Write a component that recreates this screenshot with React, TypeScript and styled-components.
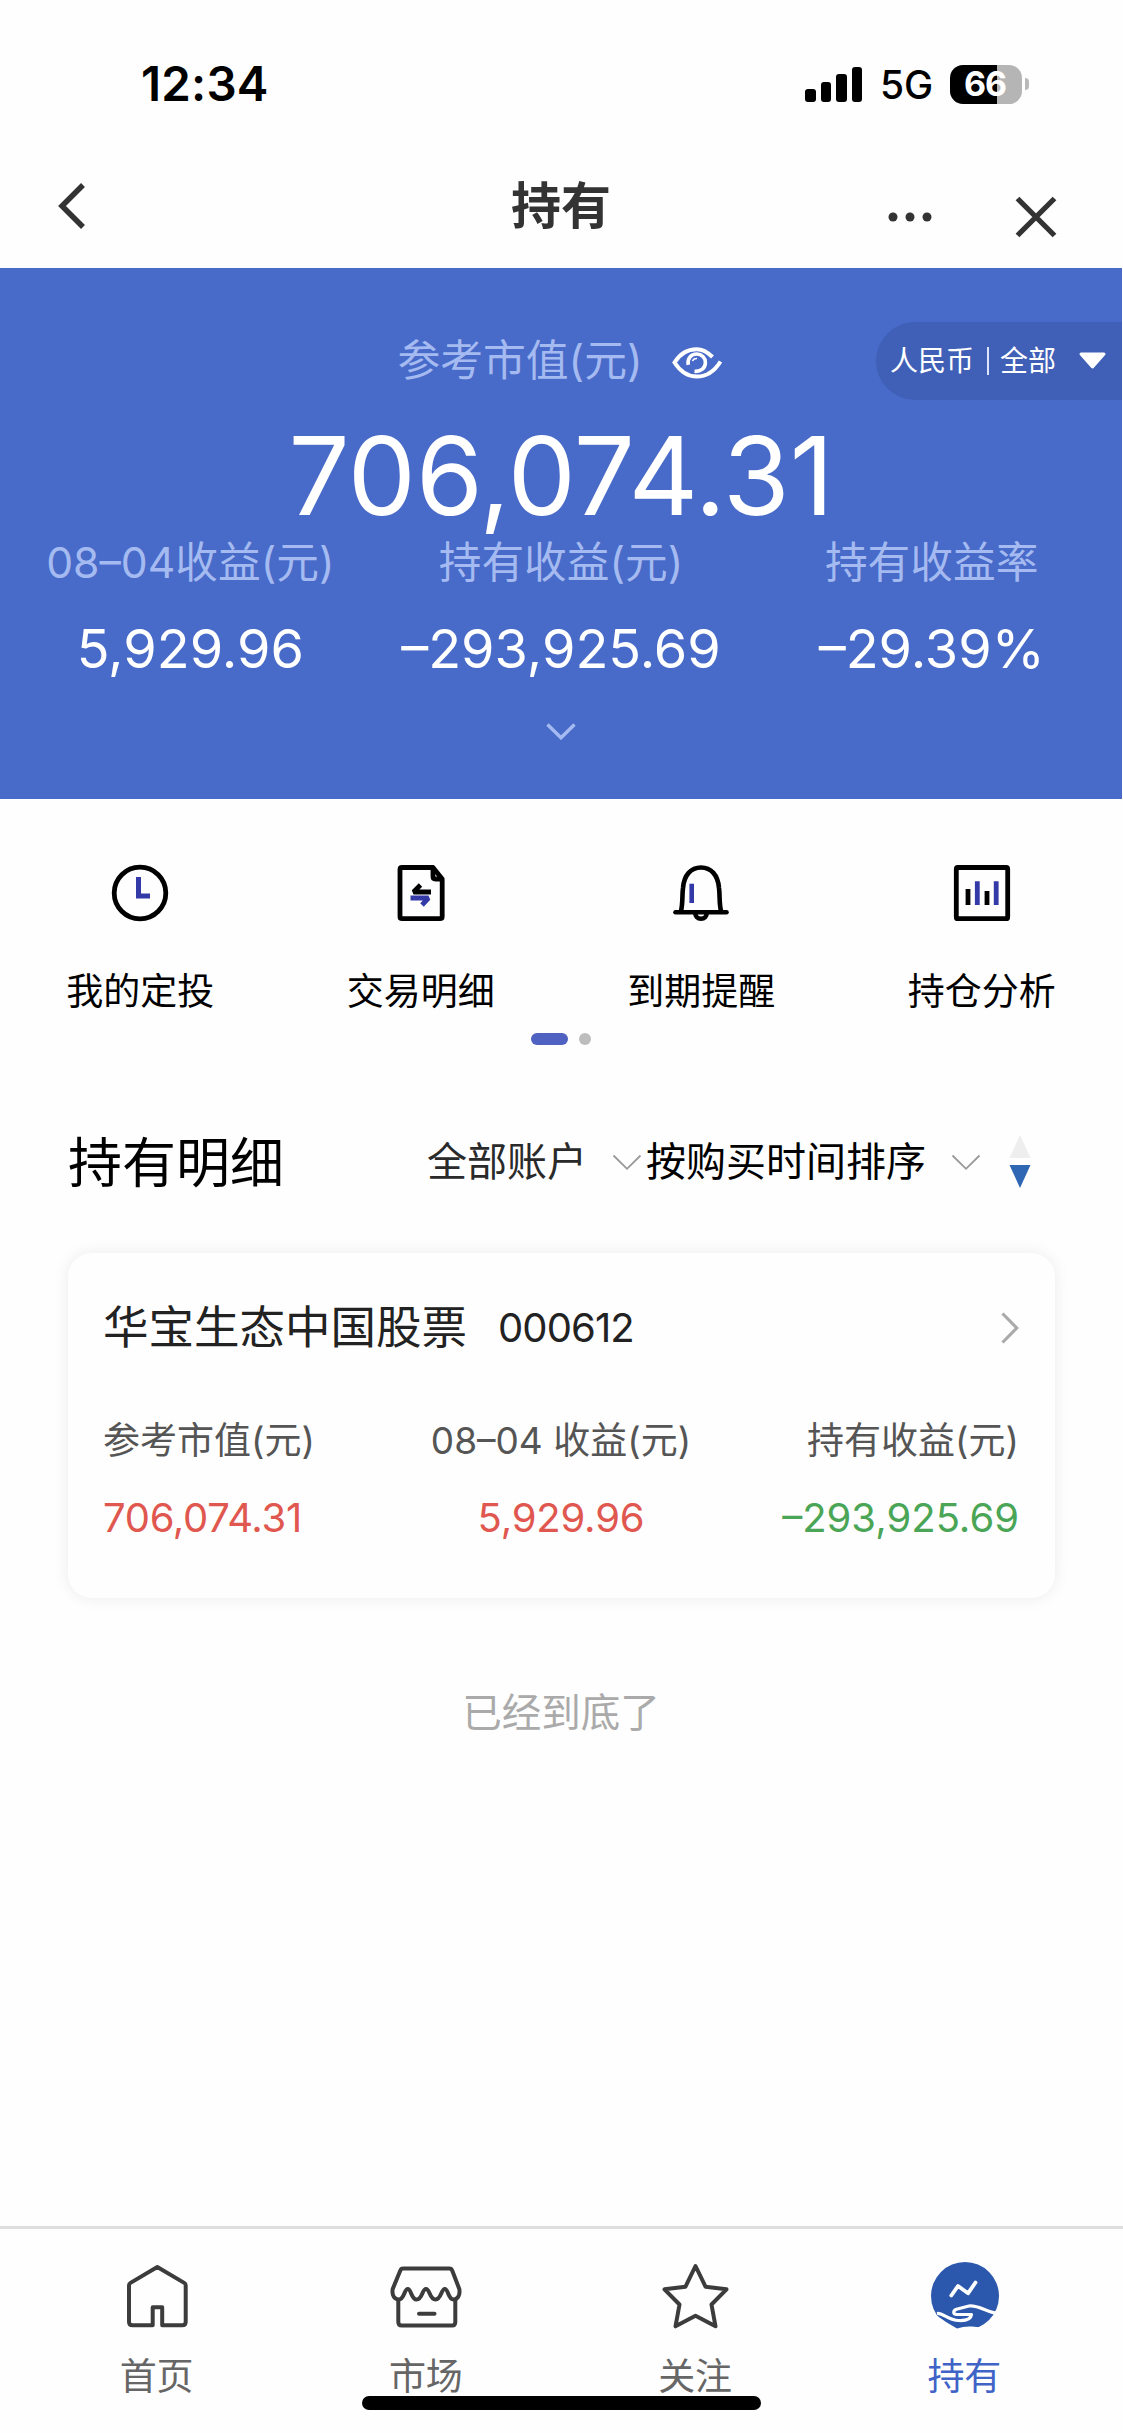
import React from "react";
import styled, { createGlobalStyle } from "styled-components";

const GlobalStyle = createGlobalStyle`
  *, *::before, *::after { box-sizing: border-box; }
  body {
    margin: 0;
    background: #fefefe;
    font-family: Inter, "Noto Sans CJK SC", sans-serif;
    font-weight: 400;
    color: #000;
  }
`;

const Screen = styled.div`
  position: relative;
  width: 1123px;
  height: 2433px;
  padding-right: 1px;
  display: flex;
  flex-direction: column;
  overflow: hidden;
  background: #fefefe;
`;

const Text = styled.span<{ $size: number; $color?: string; $spacing?: number; $weight?: number }>`
  font-size: ${(p) => p.$size}px;
  color: ${(p) => p.$color ?? "inherit"};
  letter-spacing: ${(p) => p.$spacing ?? 0}px;
  font-weight: ${(p) => p.$weight ?? 400};
  line-height: 1;
  white-space: nowrap;
`;

const Icon = styled.svg`
  display: block;
  flex: none;
  fill: none;
`;

/* status bar */
const StatusBar = styled.header`
  height: 168px;
  padding: 0 93px 0 141px;
  display: flex;
  align-items: center;
  justify-content: space-between;
`;

const StatusIcons = styled.div`
  display: flex;
  align-items: center;
`;

const Signal = styled.div`
  display: flex;
  align-items: flex-end;
  gap: 5px;
  height: 36px;
  margin-right: 18px;
`;

const SignalBar = styled.i<{ $height: number }>`
  width: 10.4px;
  height: ${(p) => p.$height}px;
  border-radius: 3px;
  background: #000;
`;

const Network = styled.div`
  width: 70px;
  display: flex;
`;

const Battery = styled.div`
  width: 72px;
  height: 39px;
  padding-right: 2px;
  border-radius: 13px;
  display: flex;
  align-items: center;
  justify-content: center;
  background: linear-gradient(90deg, #000 0 47.5px, #b5b5b5 47.5px);
`;

const BatteryCap = styled.i`
  width: 4px;
  height: 12px;
  margin-left: 3px;
  border-radius: 0 6px 6px 0;
  background: #b9b9b9;
`;

/* title bar */
const NavBar = styled.nav`
  height: 100px;
  padding: 0 65px 0 57px;
  display: grid;
  grid-template-columns: 1fr auto 1fr;
  color: #333;
`;

const NavSide = styled.div<{ $end?: boolean }>`
  height: ${(p) => (p.$end ? 98 : 75)}px;
  display: flex;
  align-items: center;
  gap: 83px;
  justify-content: ${(p) => (p.$end ? "flex-end" : "flex-start")};
`;

const NavTitle = styled.h1`
  margin: 0;
  height: 76px;
  display: flex;
  align-items: center;
  padding-left: 8px;
`;

/* blue summary */
const Summary = styled.section`
  height: 531px;
  padding-top: 54px;
  background: #486ac8;
  color: #fff;
`;

const SummaryTop = styled.div`
  height: 78px;
  display: grid;
  grid-template-columns: 1fr auto 1fr;
  align-items: center;
`;

const SummaryLabel = styled.div`
  grid-column: 2;
  display: flex;
  align-items: center;
  gap: 29px;
  padding-right: 2px;

  svg {
    margin-top: 4px;
  }
`;

const CurrencyPill = styled.button`
  justify-self: end;
  width: 246px;
  height: 78px;
  padding: 0 15px 0 14px;
  border: 0;
  border-radius: 39px 0 0 39px;
  background: #4060b7;
  color: #fff;
  font-family: inherit;
  display: flex;
  align-items: center;
  justify-content: space-between;
`;

const PillText = styled.span`
  display: flex;
  align-items: center;
  gap: 11px;
`;

const PillDivider = styled.i`
  width: 2px;
  height: 28px;
  margin: 0 0 0 2px;
  background: #dde5fb;
`;

const Amount = styled.div`
  height: 134px;
  padding-top: 18px;
  display: flex;
  align-items: center;
  justify-content: center;
`;

const Stats = styled.div`
  padding: 0 5px;
  display: grid;
  grid-template-columns: repeat(3, 1fr);
`;

const Stat = styled.div`
  display: grid;
  grid-template-rows: 58px 114px;
  align-items: center;
  justify-items: center;
`;

const Expand = styled.div`
  height: 50px;
  display: flex;
  align-items: center;
  justify-content: center;
`;

/* shortcuts */
const Shortcuts = styled.section`
  padding-top: 64px;
  display: grid;
  grid-template-columns: repeat(4, 1fr);
`;

const Shortcut = styled.div`
  display: grid;
  grid-template-rows: 60px 60px;
  row-gap: 38px;
  align-items: center;
  justify-items: center;
`;

const Pager = styled.div`
  margin-top: 12px;
  display: flex;
  justify-content: center;
  gap: 11px;
`;

const PagerDot = styled.i<{ $active?: boolean }>`
  width: ${(p) => (p.$active ? 37 : 12)}px;
  height: 12px;
  border-radius: 6px;
  background: ${(p) => (p.$active ? "#4f62c1" : "#bdbdbd")};
`;

/* holdings */
const ListHeader = styled.div`
  height: 80px;
  margin-top: 77px;
  padding: 0 91px 0 68px;
  display: flex;
  align-items: center;
`;

const ListTitle = styled.h2`
  margin: 0;
  width: 359px;
  padding-top: 4px;
  display: flex;
`;

const Filter = styled.div<{ $gap: number; $after: number }>`
  display: flex;
  align-items: center;
  gap: ${(p) => p.$gap}px;
  margin-right: ${(p) => p.$after}px;
`;

const Card = styled.article`
  height: 345px;
  margin: 51px 67px 0 68px;
  padding: 40px 36px 0 35px;
  border-radius: 24px;
  background: #fefefe;
  box-shadow: 0 0 16px rgba(0, 0, 0, 0.08);
`;

const CardHead = styled.div`
  height: 70px;
  display: flex;
  align-items: center;
  gap: 31px;
`;

const CardArrow = styled.div`
  margin-left: auto;
`;

const CardGrid = styled.div`
  margin-top: 52px;
  display: grid;
  grid-template-columns: repeat(3, 1fr);
`;

const CardCell = styled.div<{ $align: string }>`
  display: grid;
  grid-template-rows: 50px 51px;
  row-gap: 27px;
  align-items: center;
  justify-items: ${(p) => p.$align};
`;

const EndNote = styled.div`
  height: 60px;
  margin-top: 86px;
  display: flex;
  align-items: center;
  justify-content: center;
`;

/* tab bar */
const TabBar = styled.footer`
  height: 207px;
  margin: auto -1px 0 0;
  padding: 30px 24px 0 22px;
  border-top: 3px solid #dedede;
  display: grid;
  grid-template-columns: repeat(4, 1fr);
  align-items: start;
`;

const Tab = styled.div<{ $active?: boolean }>`
  display: grid;
  grid-template-rows: 72px 51px;
  row-gap: 20px;
  align-items: center;
  justify-items: center;
  color: ${(p) => (p.$active ? "#3f63c6" : "#666")};
`;

const HomeIndicator = styled.div`
  position: absolute;
  left: 362px;
  bottom: 23px;
  width: 399px;
  height: 14px;
  border-radius: 7px;
  background: #000;
`;

const INK = "#333aa8";

const BackIcon = () => (
  <Icon width="30" height="48" viewBox="0 0 30 48" stroke="#333" strokeWidth="5.500">
    <path d="M26 3 L5 24 L26 45" />
  </Icon>
);

const MoreIcon = () => (
  <Icon width="44" height="10" viewBox="0 0 44 10">
    <g fill="#333">
      <circle cx="5" cy="5" r="4.500" />
      <circle cx="22" cy="5" r="4.500" />
      <circle cx="39" cy="5" r="4.500" />
    </g>
  </Icon>
);

const CloseIcon = () => (
  <Icon width="42" height="42" viewBox="0 0 42 42" stroke="#333" strokeWidth="5.300">
    <path d="M2.500 2.500 L39.500 39.500 M39.500 2.500 L2.500 39.500" />
  </Icon>
);

const EyeIcon = () => (
  <Icon width="51" height="32" viewBox="0 0 51 32" stroke="#fff" strokeWidth="4">
    <path d="M40.500 10 C35 4.500 30 2.200 24.700 2.200 C14 2.200 6.500 9 2.500 15.500 C8 24 15.500 29.600 24.700 29.600 C35 29.600 43 23.500 48.500 14.500" />
    <path d="M16.300 17.800 C15 11.500 19 7 24.800 7 C29.700 7 33.400 10.800 33.400 15.500 C33.400 21 29 24.800 22.500 24.300" strokeWidth="3.600" />
    <path d="M20.500 14 C21.200 12.300 22.800 11.300 25 11.500" strokeWidth="1.600" />
  </Icon>
);

const CaretIcon = () => (
  <Icon width="29" height="18" viewBox="0 0 29 18">
    <path d="M3 2 H26 L14.500 15 Z" fill="#fff" stroke="#fff" strokeWidth="3" strokeLinejoin="round" />
  </Icon>
);

const Chevron = ({ color, weight }: { color: string; weight: number }) => (
  <Icon width="30" height="17" viewBox="0 0 30 17" stroke={color} strokeWidth={weight}>
    <path d="M1.500 1.500 L15 14.800 L28.500 1.500" />
  </Icon>
);

const ArrowIcon = () => (
  <Icon width="18" height="32" viewBox="0 0 18 32" stroke="#aaa" strokeWidth="3.200">
    <path d="M1.500 1.500 L15.700 16 L1.500 30.500" />
  </Icon>
);

const SortIcon = () => (
  <Icon width="22" height="54" viewBox="0 0 22 54">
    <path d="M11 0 L21.500 23 H0.500 Z" fill="#eee" />
    <path d="M0.500 30 H21.500 L11 53 Z" fill="#2f67b4" />
  </Icon>
);

const ClockIcon = () => (
  <Icon width="60" height="60" viewBox="0 0 60 60">
    <circle cx="30" cy="30" r="25.800" stroke="#000" strokeWidth="4.800" />
    <path d="M28.500 14 V33 H40" stroke={INK} strokeWidth="5" />
  </Icon>
);

const OrderIcon = () => (
  <Icon width="60" height="60" viewBox="0 0 60 60" stroke="#000" strokeWidth="4.800">
    <path d="M9 6.500 Q9 4.500 11 4.500 H42 L51.200 16 V53.500 Q51.200 55.700 49 55.700 H11 Q9 55.700 9 53.500 Z" strokeLinejoin="round" />
    <path d="M42 5 V13.500 Q42 16 44.500 16 H51" />
    <path d="M40 29 H22.500 L29.500 22" strokeLinejoin="bevel" />
    <path d="M19.500 35 H37.500 L31 42" stroke={INK} strokeLinejoin="bevel" />
  </Icon>
);

const BellIcon = () => (
  <Icon width="60" height="60" viewBox="0 0 60 60" stroke="#000" strokeWidth="4.600">
    <path d="M10 48 C12 40 11 32 12 25 C13 12 20 4.500 30 4.500 C40 4.500 47 12 48 25 C49 32 48 40 50 48" />
    <path d="M4.500 49.200 H55.500" strokeLinecap="round" />
    <path d="M24.300 50 C24.300 53.500 26.500 55.800 30 55.800 C33.500 55.800 35.700 53.500 35.700 50" />
    <path d="M20.700 20.700 V40" stroke={INK} />
  </Icon>
);

const ChartIcon = () => (
  <Icon width="60" height="60" viewBox="0 0 60 60" strokeWidth="4.800">
    <rect x="4.300" y="4.500" width="51.400" height="51.200" rx="1.500" stroke="#000" />
    <path d="M16 26 V42 M35 28 V42" stroke="#000" />
    <path d="M25.300 18.300 V42 M44.200 18.300 V42" stroke={INK} />
  </Icon>
);

const HomeIcon = () => (
  <Icon width="72" height="72" viewBox="0 0 72 72" stroke="#3c3c3c" strokeWidth="4" strokeLinejoin="round">
    <path d="M31.700 66.300 H11.500 Q8 66.300 8 62.800 V26.500 Q8 24.800 9.500 23.900 L36.300 8 L63.200 23.900 Q64.700 24.800 64.700 26.500 V62.800 Q64.700 66.300 61.200 66.300 H41.200 V48.300 H31.700 Z" />
  </Icon>
);

const MarketIcon = () => (
  <Icon width="72" height="72" viewBox="0 0 72 72" stroke="#3c3c3c" strokeWidth="4" strokeLinejoin="round">
    <path d="M13 9.500 H59.500 Q61.500 9.500 62.200 11.500 L69.300 30 C70.500 37 67 40.500 63.500 40.500 C58 40.500 58.500 30 54.800 30 C51 30 51.500 40.500 45.500 40.500 C39.500 40.500 40 30 36 30 C32 30 32.500 40.500 26.700 40.500 C21 40.500 21.500 30 17.800 30 C14 30 14.500 40.500 8.800 40.500 C5 40.500 1.500 37 2.700 30 L10.300 11.500 Q11 9.500 13 9.500 Z" />
    <path d="M8.300 41 V63 Q8.300 66.500 11.800 66.500 H62 Q65.300 66.500 65.300 63 V41" />
    <path d="M29 54.700 H44.500" strokeLinecap="round" />
  </Icon>
);

const StarIcon = () => (
  <Icon width="72" height="72" viewBox="0 0 72 72" stroke="#3c3c3c" strokeWidth="4" strokeLinejoin="round">
    <path d="M36.500 7 L46.500 27.700 L67.500 30.300 L52.500 45.500 L56.500 67.300 L36.500 56.700 L16.500 67.300 L20.500 45.500 L5.500 30.300 L26.500 27.700 Z" />
  </Icon>
);

const HoldIcon = () => (
  <Icon width="72" height="72" viewBox="0 0 72 72">
    <circle cx="37" cy="37" r="34" fill="#2b58ad" />
    <path d="M0 52 L8 56 L18 63 L29 69.500 Q36 67 44 67.500 Q54 69 61 68.500 L62.500 62 L66.500 55.500 L73 54 V73 H0 Z" fill="#fefefe" />
    <path d="M9 54.500 C15 53.500 20 61.500 31 61.500 C38 61.800 43 60 43.500 55.500 L29 55.500 C24.500 55.500 25 51.500 28.500 50.300 L41 47 C50 46 58 52.500 69 54.500" stroke="#fff" strokeWidth="3.200" strokeLinejoin="round" />
    <path d="M23.300 36.500 L30 27 L40 34.300 L47.500 23.500" stroke="#fff" strokeWidth="3.800" strokeLinecap="round" strokeLinejoin="round" />
  </Icon>
);

const stats = [
  { label: "08–04收益(元)", value: "5,929.96" },
  { label: "持有收益(元)", value: "–293,925.69" },
  { label: "持有收益率", value: "–29.39%" },
];

const shortcuts = [
  { label: "我的定投", icon: <ClockIcon /> },
  { label: "交易明细", icon: <OrderIcon /> },
  { label: "到期提醒", icon: <BellIcon /> },
  { label: "持仓分析", icon: <ChartIcon /> },
];

const cells = [
  { label: "参考市值(元)", value: "706,074.31", color: "#e0574f", align: "start", spacing: -0.3 },
  { label: "08–04 收益(元)", value: "5,929.96", color: "#e0574f", align: "center", spacing: -0.2 },
  { label: "持有收益(元)", value: "–293,925.69", color: "#4aa556", align: "end", spacing: 0 },
];

const tabs = [
  { label: "首页", icon: <HomeIcon /> },
  { label: "市场", icon: <MarketIcon /> },
  { label: "关注", icon: <StarIcon /> },
  { label: "持有", icon: <HoldIcon />, active: true },
];

export default function App() {
  return (
    <>
      <GlobalStyle />
      <Screen>
        <StatusBar>
          <Text $size={47.5} $weight={600} $spacing={0.2}>12:34</Text>
          <StatusIcons>
            <Signal>
              {[13.5, 20, 28, 35.5].map((h) => (
                <SignalBar key={h} $height={h} />
              ))}
            </Signal>
            <Network>
              <Text $size={39} $weight={500}>5G</Text>
            </Network>
            <Battery>
              <Text $size={34} $weight={700} $color="#fff" $spacing={-1}>66</Text>
            </Battery>
            <BatteryCap />
          </StatusIcons>
        </StatusBar>

        <NavBar>
          <NavSide>
            <BackIcon />
          </NavSide>
          <NavTitle>
            <Text $size={50} $weight={600}>持有</Text>
          </NavTitle>
          <NavSide $end>
            <MoreIcon />
            <CloseIcon />
          </NavSide>
        </NavBar>

        <Summary>
          <SummaryTop>
            <SummaryLabel>
              <Text $size={42.8} $color="#a4baf0">参考市值(元)</Text>
              <EyeIcon />
            </SummaryLabel>
            <CurrencyPill>
              <PillText>
                <Text $size={28}>人民币</Text>
                <PillDivider />
                <Text $size={28}>全部</Text>
              </PillText>
              <CaretIcon />
            </CurrencyPill>
          </SummaryTop>
          <Amount>
            <Text $size={108}>706,074.31</Text>
          </Amount>
          <Stats>
            {stats.map((s) => (
              <Stat key={s.label}>
                <Text $size={42.7} $color="#a4baf0">{s.label}</Text>
                <Text $size={54}>{s.value}</Text>
              </Stat>
            ))}
          </Stats>
          <Expand>
            <Chevron color="#a4baf0" weight={3.4} />
          </Expand>
        </Summary>

        <Shortcuts>
          {shortcuts.map((s) => (
            <Shortcut key={s.label}>
              {s.icon}
              <Text $size={37}>{s.label}</Text>
            </Shortcut>
          ))}
        </Shortcuts>
        <Pager>
          <PagerDot $active />
          <PagerDot />
        </Pager>

        <ListHeader>
          <ListTitle>
            <Text $size={54}>持有明细</Text>
          </ListTitle>
          <Filter $gap={25} $after={4}>
            <Text $size={40} $color="#2a2a2a">全部账户</Text>
            <Chevron color="#999" weight={1.8} />
          </Filter>
          <Filter $gap={25} $after={28}>
            <Text $size={40}>按购买时间排序</Text>
            <Chevron color="#999" weight={1.8} />
          </Filter>
          <SortIcon />
        </ListHeader>

        <Card>
          <CardHead>
            <Text $size={45.5} $color="#222">华宝生态中国股票</Text>
            <Text $size={40} $color="#222" $spacing={-0.9}>000612</Text>
            <CardArrow>
              <ArrowIcon />
            </CardArrow>
          </CardHead>
          <CardGrid>
            {cells.map((c) => (
              <CardCell key={c.label} $align={c.align}>
                <Text $size={37} $color="#555">{c.label}</Text>
                <Text $size={40} $color={c.color} $spacing={c.spacing}>{c.value}</Text>
              </CardCell>
            ))}
          </CardGrid>
        </Card>

        <EndNote>
          <Text $size={39.5} $color="#aaa">已经到底了</Text>
        </EndNote>

        <TabBar>
          {tabs.map((t) => (
            <Tab key={t.label} $active={t.active}>
              {t.icon}
              <Text $size={37}>{t.label}</Text>
            </Tab>
          ))}
        </TabBar>
        <HomeIndicator />
      </Screen>
    </>
  );
}
